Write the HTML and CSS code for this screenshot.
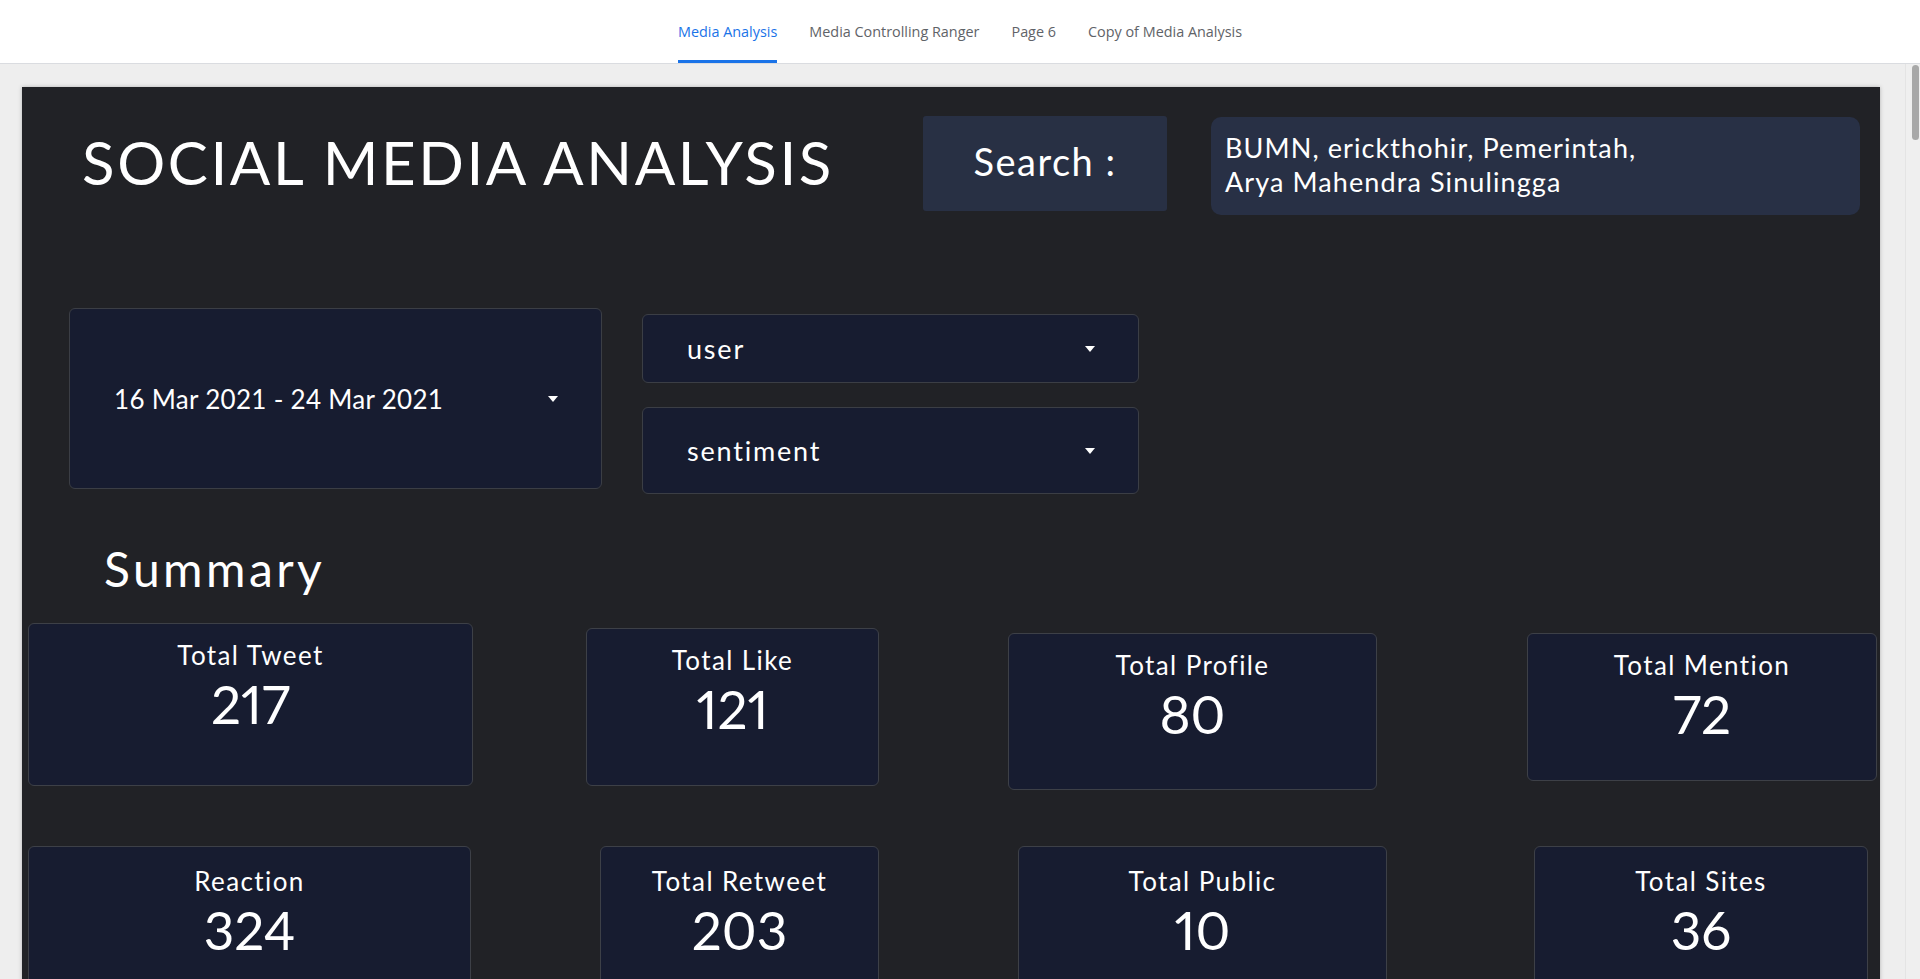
FILE: index.html
```html
<!DOCTYPE html>
<html lang="id">
<head>
<meta charset="utf-8">
<title>Social Media Analysis</title>
<link rel="stylesheet" href="styles.css">
</head>
<body>
<header class="topbar">
  <nav class="tabs">
    <a class="tab active">Media Analysis</a>
    <a class="tab">Media Controlling Ranger</a>
    <a class="tab">Page 6</a>
    <a class="tab">Copy of Media Analysis</a>
  </nav>
</header>
<div class="viewport">
  <main class="stage">
    <section class="canvas">
      <div class="head-row">
        <h1 class="title">SOCIAL MEDIA ANALYSIS</h1>
        <div class="search-label">Search :</div>
        <div class="keywords">BUMN, erickthohir, Pemerintah,<br>Arya Mahendra Sinulingga</div>
      </div>

      <div class="filter-row">
        <div class="control date-box">
          <span>16 Mar 2021 - 24 Mar 2021</span>
          <span class="caret"></span>
        </div>
        <div class="filter-col">
          <div class="control dd dd-user">
            <span>user</span>
            <span class="caret"></span>
          </div>
          <div class="control dd dd-sentiment">
            <span>sentiment</span>
            <span class="caret"></span>
          </div>
        </div>
      </div>

      <h2 class="summary">Summary</h2>

      <div class="cards cards-1">
        <div class="card c-tweet"><div class="label">Total Tweet</div><div class="value">217</div></div>
        <div class="card c-like"><div class="label">Total Like</div><div class="value">121</div></div>
        <div class="card c-profile"><div class="label">Total Profile</div><div class="value">80</div></div>
        <div class="card c-mention"><div class="label">Total Mention</div><div class="value">72</div></div>
      </div>

      <div class="cards cards-2">
        <div class="card c-reaction"><div class="label">Reaction</div><div class="value">324</div></div>
        <div class="card c-retweet"><div class="label">Total Retweet</div><div class="value">203</div></div>
        <div class="card c-public"><div class="label">Total Public</div><div class="value">10</div></div>
        <div class="card c-sites"><div class="label">Total Sites</div><div class="value">36</div></div>
      </div>
    </section>
  </main>
  <div class="scrollbar"><div class="thumb"></div></div>
</div>
</body>
</html>
```

FILE: styles.css
```css
* { box-sizing: border-box; }

html, body {
  margin: 0;
  padding: 0;
  height: 979px;
  overflow: hidden;
}

body {
  background: #eeeeee;
  font-family: "Lato", "Open Sans", sans-serif;
  color: #ffffff;
}

/* ---------- top tab bar ---------- */
.topbar {
  height: 64px;
  background: #ffffff;
  border-bottom: 1px solid #dadce0;
  display: flex;
  justify-content: center;
}

.tabs {
  display: flex;
  height: 63px;
}

.tab {
  margin: 0 16px;
  height: 63px;
  display: flex;
  align-items: center;
  font-family: "Open Sans", "Roboto", sans-serif;
  font-size: 14.4px;
  color: #5f6368;
  border-bottom: 3px solid transparent;
  padding-top: 3px;
  white-space: nowrap;
}

.tab.active {
  color: #1a73e8;
  border-bottom-color: #1a73e8;
  border-radius: 3px 3px 0 0;
}

/* ---------- viewport with fake scrollbar ---------- */
.viewport {
  display: flex;
  height: 915px;
}

.stage {
  flex: 1;
  padding: 23px 25px 0 22px;
  overflow: hidden;
}

.scrollbar {
  width: 15px;
  background: #efefef;
  border-left: 1px solid #e4e4e4;
  padding: 1px 1px 0 6px;
}

.thumb {
  height: 75px;
  background: #a8a8a8;
  border-radius: 4px;
}

/* ---------- dashboard canvas ---------- */
.canvas {
  background: #212226;
  height: 1000px;
  box-shadow: 0 0 4px rgba(0, 0, 0, 0.25);
  padding-top: 29px;
}

.head-row {
  display: flex;
  align-items: flex-start;
}

.title {
  margin: 10px 0 0 60px;
  width: 841px;
  flex: none;
  font-size: 60px;
  font-weight: 400;
  line-height: 1.2;
  letter-spacing: 2.6px;
  white-space: nowrap;
}

.search-label {
  width: 244px;
  height: 95px;
  flex: none;
  background: #283044;
  border-radius: 3px;
  display: flex;
  align-items: center;
  justify-content: center;
  padding-bottom: 6px;
  font-size: 38px;
  letter-spacing: 1.5px;
}

.keywords {
  margin-left: 44px;
  margin-top: 1px;
  width: 649px;
  height: 98px;
  flex: none;
  background: #283045;
  border-radius: 10px;
  padding: 14px 0 0 14px;
  font-size: 27px;
  line-height: 34px;
  letter-spacing: 1.1px;
}

/* ---------- filters ---------- */
.filter-row {
  display: flex;
  align-items: flex-start;
  margin-top: 93px;
  margin-left: 47px;
}

.control {
  background: #171c30;
  border: 1px solid #3b3e45;
  border-radius: 6px;
  display: flex;
  align-items: center;
  justify-content: space-between;
  padding: 0 43px 0 44px;
  font-size: 26px;
  letter-spacing: 0.3px;
}

.date-box {
  width: 533px;
  height: 181px;
}

.filter-col {
  margin-left: 40px;
  margin-top: 6px;
  display: flex;
  flex-direction: column;
  gap: 24px;
}

.dd {
  width: 497px;
  font-size: 27px;
  letter-spacing: 1.8px;
}

.dd-user { height: 69px; }
.dd-sentiment { height: 87px; }

.caret {
  width: 0;
  height: 0;
  border-left: 5.5px solid transparent;
  border-right: 5.5px solid transparent;
  border-top: 6px solid #ffffff;
}

/* ---------- summary ---------- */
.summary {
  margin: 46px 0 0 82px;
  font-size: 48px;
  font-weight: 400;
  line-height: 1.2;
  letter-spacing: 3.4px;
}

.cards {
  display: flex;
  align-items: flex-start;
}

.cards-1 { margin-top: 25px; }
.cards-2 { margin-top: 56px; }

.card {
  flex: none;
  background: #171c30;
  border: 1px solid #3d4047;
  border-radius: 6px;
  text-align: center;
  padding-top: 16px;
}

.label {
  font-size: 26px;
  line-height: 31px;
  letter-spacing: 1.4px;
}

.value {
  margin-top: 2px;
  font-size: 53px;
  line-height: 62px;
  font-weight: 400;
  font-variant-numeric: proportional-nums;
}

.c-tweet   { margin-left: 6px;   width: 445px; height: 163px; }
.c-like    { margin-left: 113px; width: 293px; height: 158px; margin-top: 5px; }
.c-profile { margin-left: 129px; width: 369px; height: 157px; margin-top: 10px; }
.c-mention { margin-left: 150px; width: 350px; height: 148px; margin-top: 10px; }

.cards-2 .card { height: 170px; padding-top: 19px; }
.c-reaction { margin-left: 6px;   width: 443px; }
.c-retweet  { margin-left: 129px; width: 279px; }
.c-public   { margin-left: 139px; width: 369px; }
.c-sites    { margin-left: 147px; width: 334px; }
```
